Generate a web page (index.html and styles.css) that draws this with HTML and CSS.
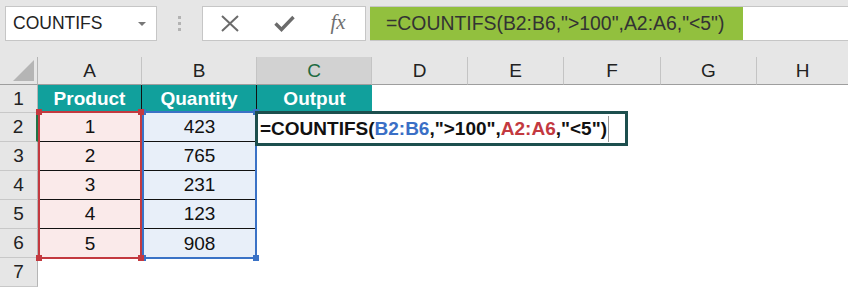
FILE: index.html
```html
<!DOCTYPE html>
<html lang="en">
<head>
  <meta charset="UTF-8">
  <title>COUNTIFS</title>
  <link rel="stylesheet" href="styles.css">
</head>
<body>
  <div class="toolbar">
    <div class="name-box">
      <span>COUNTIFS</span>
      <span class="arrow"></span>
    </div>
    <div class="grip"><i></i><i></i><i></i></div>
    <div class="fx-buttons">
      <span class="btn">
        <svg width="20" height="17" viewBox="0 0 20 17"><path d="M2 1 L18 16 M18 1 L2 16" stroke="#6b6b6b" stroke-width="2" fill="none"/></svg>
      </span>
      <span class="btn">
        <svg width="21" height="17" viewBox="0 0 21 17"><path d="M1.5 8.5 L7.5 14.5 L19.5 2" stroke="#6b6b6b" stroke-width="3.4" fill="none"/></svg>
      </span>
      <span class="btn fx">fx</span>
    </div>
    <div class="formula">
      <span class="formula-text">=COUNTIFS(B2:B6,"&gt;100",A2:A6,"&lt;5")</span>
    </div>
  </div>

  <div class="sheet">
    <div class="hd corner"><span class="tri"></span></div>
    <div class="hd">A</div>
    <div class="hd">B</div>
    <div class="hd active">C</div>
    <div class="hd">D</div>
    <div class="hd">E</div>
    <div class="hd">F</div>
    <div class="hd">G</div>
    <div class="hd last">H</div>

    <div class="rh">1</div>
    <div class="cell title">Product</div>
    <div class="cell title">Quantity</div>
    <div class="cell title end">Output</div>
    <div class="cell"></div><div class="cell"></div><div class="cell"></div><div class="cell"></div><div class="cell"></div>

    <div class="rh active">2</div>
    <div class="cell pa anchor">1
      <div class="range range-a">
        <i class="h tl"></i><i class="h tr"></i><i class="h bl"></i><i class="h br"></i>
      </div>
    </div>
    <div class="cell pb anchor">423
      <div class="range range-b">
        <i class="h tl"></i><i class="h tr"></i><i class="h bl"></i><i class="h br"></i>
      </div>
    </div>
    <div class="cell anchor edit-host">
      <div class="editor">=COUNTIFS(<span class="ref-b">B2:B6</span>,"&gt;100",<span class="ref-a">A2:A6</span>,"&lt;5")<span class="caret"></span></div>
    </div>
    <div class="cell"></div><div class="cell"></div><div class="cell"></div><div class="cell"></div><div class="cell"></div>

    <div class="rh">3</div>
    <div class="cell pa">2</div>
    <div class="cell pb">765</div>
    <div class="cell"></div><div class="cell"></div><div class="cell"></div><div class="cell"></div><div class="cell"></div><div class="cell"></div>

    <div class="rh">4</div>
    <div class="cell pa">3</div>
    <div class="cell pb">231</div>
    <div class="cell"></div><div class="cell"></div><div class="cell"></div><div class="cell"></div><div class="cell"></div><div class="cell"></div>

    <div class="rh">5</div>
    <div class="cell pa">4</div>
    <div class="cell pb">123</div>
    <div class="cell"></div><div class="cell"></div><div class="cell"></div><div class="cell"></div><div class="cell"></div><div class="cell"></div>

    <div class="rh">6</div>
    <div class="cell pa last-row">5</div>
    <div class="cell pb last-row">908</div>
    <div class="cell"></div><div class="cell"></div><div class="cell"></div><div class="cell"></div><div class="cell"></div><div class="cell"></div>

    <div class="rh">7</div>
    <div class="cell"></div><div class="cell"></div><div class="cell"></div><div class="cell"></div><div class="cell"></div><div class="cell"></div><div class="cell"></div><div class="cell"></div>
  </div>
</body>
</html>
```

FILE: styles.css
```css
body {
  margin: 0;
  font-family: "Liberation Sans", Arial, sans-serif;
  background: #fff;
  width: 848px;
  height: 288px;
  overflow: hidden;
}

/* top bar */
.toolbar {
  display: flex;
  align-items: flex-start;
  height: 57px;
  padding: 6px 0 0 5px;
  box-sizing: border-box;
  background: #e6e6e6;
}

.name-box {
  width: 152px;
  height: 35px;
  box-sizing: border-box;
  border: 1px solid #c6c6c6;
  background: #fff;
  display: flex;
  align-items: center;
  justify-content: space-between;
  padding: 0 10px 0 7px;
  font-size: 17.5px;
  color: #222;
}

.name-box .arrow {
  width: 0;
  height: 0;
  border-left: 4px solid transparent;
  border-right: 4px solid transparent;
  border-top: 4px solid #777;
}

.grip {
  width: 45px;
  height: 35px;
  display: flex;
  flex-direction: column;
  align-items: center;
  justify-content: center;
  gap: 3px;
}

.grip i {
  width: 3px;
  height: 3px;
  background: #b3b3b3;
}

.fx-buttons {
  width: 164px;
  height: 35px;
  box-sizing: border-box;
  border: 1px solid #c6c6c6;
  background: #fff;
  display: flex;
  margin-right: 4px;
}

.fx-buttons .btn {
  flex: 1;
  display: flex;
  align-items: center;
  justify-content: center;
}

.fx-buttons .fx {
  font-family: "Liberation Serif", "Times New Roman", serif;
  font-style: italic;
  font-size: 21px;
  color: #707070;
  padding-bottom: 2px;
}

.formula {
  flex: 1;
  height: 35px;
  box-sizing: border-box;
  border-top: 1px solid #c6c6c6;
  border-bottom: 1px solid #c6c6c6;
  background: #fff;
}

.formula-text {
  display: block;
  width: 373px;
  height: 33px;
  box-sizing: border-box;
  background: #92c03e;
  padding-left: 16px;
  line-height: 33px;
  font-size: 19.4px;
  color: #333;
  white-space: nowrap;
}

/* sheet */
.sheet {
  display: grid;
  grid-template-columns: 38px 104px 115px 115px 96px 96px 97px 96px 1fr;
  grid-template-rows: 28px 28px repeat(6, 29px);
  font-size: 19px;
  color: #111;
}

.hd {
  background: #e6e6e6;
  border-right: 1px solid #c4c4c4;
  border-bottom: 1px solid #9e9e9e;
  display: flex;
  align-items: center;
  justify-content: center;
  color: #222;
}

.hd.last {
  border-right: none;
}

.hd.active {
  background: #d2d2d2;
  color: #1e6b41;
}

.hd.corner {
  position: relative;
  border-right: 1px solid #b5b5b5;
}

.corner .tri {
  position: absolute;
  right: 3px;
  bottom: 3px;
  width: 0;
  height: 0;
  border-left: 21px solid transparent;
  border-bottom: 21px solid #b5b5b5;
}

.rh {
  background: #e6e6e6;
  border-right: 1px solid #b5b5b5;
  border-bottom: 1px solid #c8c8c8;
  display: flex;
  align-items: center;
  justify-content: center;
  color: #222;
}

.rh.active {
  border-right: 2px solid #217346;
}

.cell {
  display: flex;
  align-items: center;
  justify-content: center;
  min-width: 0;
}

.cell.anchor {
  position: relative;
}

.cell.title {
  background: #11a09c;
  color: #fff;
  font-weight: bold;
  border-right: 1px solid #111;
}

.cell.title.end {
  border-right: none;
}

.cell.pa {
  background: #faeaea;
  border-bottom: 1px solid #111;
}

.cell.pb {
  background: #e8eff9;
  border-bottom: 1px solid #111;
}

.cell.last-row {
  border-bottom: none;
}

/* in-cell editor lies over D2:F2 */
.edit-host {
  z-index: 4;
}

.editor {
  position: absolute;
  left: -2px;
  top: -2px;
  width: 373px;
  height: 35px;
  box-sizing: border-box;
  border: 3px solid #1d4f4e;
  background: #fff;
  padding-left: 2px;
  display: flex;
  align-items: center;
  font-weight: bold;
  white-space: nowrap;
  color: #111;
}

.ref-b {
  color: #3a6fc6;
}

.ref-a {
  color: #c3393f;
}

.caret {
  width: 1px;
  height: 26px;
  margin-left: 1px;
  background: #999;
}

/* reference range outlines, drawn over A2:A6 and B2:B6 */
.range {
  position: absolute;
  left: 0;
  top: -2px;
  width: 100%;
  height: 148px;
  box-sizing: border-box;
}

.pa.anchor {
  z-index: 3;
}

.pb.anchor {
  z-index: 2;
}

.range-a {
  border: 2px solid #c3393f;
}

.range-b {
  border: 2px solid #3a72c6;
}

.range .h {
  position: absolute;
  width: 6px;
  height: 6px;
}

.range-a .h {
  background: #c3393f;
}

.range-b .h {
  background: #3a72c6;
}

.range .tl { left: -4px; top: -4px; }
.range .tr { right: -4px; top: -4px; }
.range .bl { left: -4px; bottom: -4px; }
.range .br { right: -4px; bottom: -4px; }
```
